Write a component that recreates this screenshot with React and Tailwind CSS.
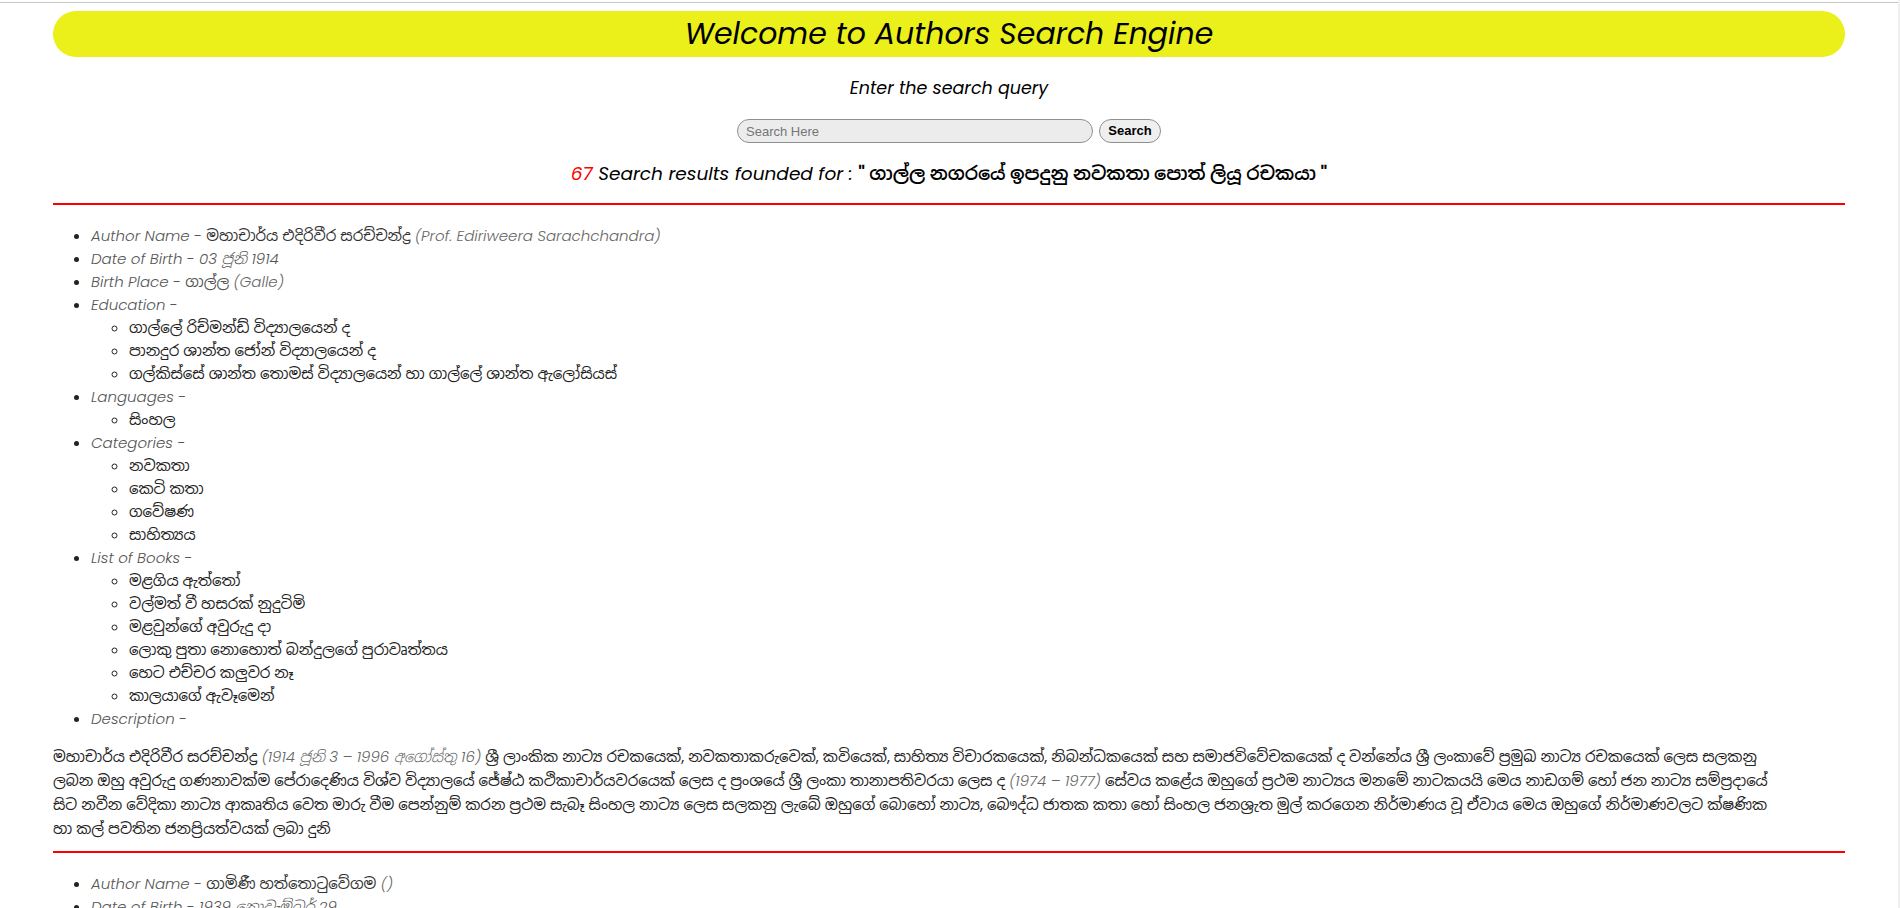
export default function App() {
  const Label = ({ children }) => (
    <span className="italic font-light text-[#555555]">{children}</span>
  );
  const Gray = ({ children }) => (
    <span className="italic font-light text-[#666666]">{children}</span>
  );

  const blocks = [
    {
      name: "මහාචාර්ය එදිරිවීර සරච්චන්ද්‍ර",
      en: "(Prof. Ediriweera Sarachchandra)",
      dob: "03 ජූනි 1914",
      place: "ගාල්ල",
      placeEn: "(Galle)",
      education: [
        "ගාල්ලේ රිච්මන්ඩ් විද්‍යාලයෙන් ද",
        "පානදුර ශාන්ත ජෝන් විද්‍යාලයෙන් ද",
        "ගල්කිස්සේ ශාන්ත තොමස් විද්‍යාලයෙන් හා ගාල්ලේ ශාන්ත ඇලෝසියස්",
      ],
      languages: ["සිංහල"],
      categories: ["නවකතා", "කෙටි කතා", "ගවේෂණ", "සාහිත්‍යය"],
      books: [
        "මළගිය ඇත්තෝ",
        "වල්මත් වී හසරක් නුදුටිමි",
        "මළවුන්ගේ අවුරුදු දා",
        "ලොකු පුතා නොහොත් බන්දුලගේ පුරාවෘත්තය",
        "හෙට එච්චර කලුවර නෑ",
        "කාලයාගේ ඇවෑමෙන්",
      ],
    },
    {
      name: "ගාමිණී හත්තොටුවේගම",
      en: "()",
      dob: "1939 නොවැම්බර් 29",
      place: "කොළඹ",
      placeEn: "(Colombo)",
      education: ["ආනන්ද විද්‍යාලය"],
      languages: ["සිංහල"],
      categories: ["නවකතා", "කෙටි කතා"],
      books: ["ගිරිකූටය", "මිනිසා සහ මිනිසා"],
    },
  ];

  const Sub = ({ items }) => (
    <ul className="list-[circle] pl-[38px]">
      {items.map((t, i) => (
        <li key={i} className="text-[#222222]">{t}</li>
      ))}
    </ul>
  );

  const Block = ({ b, first }) => (
    <div>
      <ul className="list-disc pl-[38px] mt-[19px] mb-[15px] text-[15px] leading-[23px] text-[#222222]">
        <li>
          <Label>Author Name - </Label>
          <span className="text-[#333333]">{b.name} </span>
          <Gray>{b.en}</Gray>
        </li>
        <li>
          <Label>Date of Birth - {b.dob}</Label>
        </li>
        <li>
          <Label>Birth Place - </Label>
          <span className="text-[#555555]">{b.place} </span>
          <Gray>{b.placeEn}</Gray>
        </li>
        <li>
          <Label>Education - </Label>
          <Sub items={b.education} />
        </li>
        <li>
          <Label>Languages - </Label>
          <Sub items={b.languages} />
        </li>
        <li>
          <Label>Categories - </Label>
          <Sub items={b.categories} />
        </li>
        <li>
          <Label>List of Books - </Label>
          <Sub items={b.books} />
        </li>
        <li>
          <Label>Description - </Label>
        </li>
      </ul>
      {first && (
        <p className="text-[15px] leading-[24px] text-[#222222]">
          මහාචාර්ය එදිරිවීර සරච්චන්ද්‍ර <Gray>(1914 ජූනි 3 – 1996 අගෝස්තු 16)</Gray> ශ්‍රී ලාංකික නාට්‍ය රචකයෙක්, නවකතාකරුවෙක්, කවියෙක්, සාහිත්‍ය විචාරකයෙක්, නිබන්ධකයෙක් සහ සමාජවිවේචකයෙක් ද වන්නේය ශ්‍රී ලංකාවේ ප්‍රමුඛ නාට්‍ය රචකයෙක් ලෙස සලකනු
          <br />
          ලබන ඔහු අවුරුදු ගණනාවක්ම පේරාදෙණිය විශ්ව විද්‍යාලයේ ජේෂ්ඨ කථිකාචාර්යවරයෙක් ලෙස ද ප්‍රංශයේ ශ්‍රී ලංකා තානාපතිවරයා ලෙස ද <Gray>(1974 – 1977)</Gray> සේවය කළේය ඔහුගේ ප්‍රථම නාට්‍යය මනමේ නාටකයයි මෙය නාඩගම් හෝ ජන නාට්‍ය සම්ප්‍රදායේ
          <br />
          සිට නවීන වේදිකා නාට්‍ය ආකෘතිය වෙත මාරු වීම පෙන්නුම් කරන ප්‍රථම සැබෑ සිංහල නාට්‍ය ලෙස සලකනු ලැබේ ඔහුගේ බොහෝ නාට්‍ය, බෞද්ධ ජාතක කතා හෝ සිංහල ජනශ්‍රැත මුල් කරගෙන නිර්මාණය වූ ඒවාය මෙය ඔහුගේ නිර්මාණවලට ක්ෂණික
          <br />
          හා කල් පවතින ජනප්‍රියත්වයක් ලබා දුනි
        </p>
      )}
      <div className="h-[2px] bg-[#ff0000] mt-[10px]" />
    </div>
  );

  return (
    <div className="flex min-h-screen bg-white font-['Poppins','Inter','Noto_Sans_Sinhala','Noto_Sans',sans-serif]">
      <div className="flex-1 mt-[2px] border-t border-[#c8c8c8]">
        <div className="mx-[53px] pt-[8px]">
          <div className="h-[46px] rounded-full bg-[#ebf01a] flex items-center justify-center">
            <h1 className="text-[30px] italic font-normal text-black leading-none">
              Welcome to Authors Search Engine
            </h1>
          </div>
          <p className="mt-[19px] text-center text-[17.5px] leading-[24px] italic text-black">
            Enter the search query
          </p>
          <div className="mt-[19px] flex justify-center gap-[6px]">
            <input
              type="text"
              placeholder="Search Here"
              className="w-[356px] h-[24px] rounded-full border border-[#8f8f8f] bg-[#ececec] px-[8px] text-[13px] font-['Liberation_Sans',Arial,sans-serif] text-black placeholder:text-[#757575] outline-none"
            />
            <button className="w-[62px] h-[24px] rounded-full border border-[#8f8f8f] bg-[#efefef] text-[13px] font-bold font-['Liberation_Sans',Arial,sans-serif] text-black">
              Search
            </button>
          </div>
          <p className="mt-[19px] text-center text-[18.5px] leading-[24px] italic text-black">
            <span className="text-[#ff0000]">67</span> Search results founded for :{" "}
            <span className="not-italic font-semibold">" ගාල්ල නගරයේ ඉපදුනු නවකතා පොත් ලියූ රචකයා "</span>
          </p>
          <div className="h-[2px] bg-[#ff0000] mt-[17px]" />
          {blocks.map((b, i) => (
            <Block key={i} b={b} first={i === 0} />
          ))}
        </div>
      </div>
      <div className="w-[2px] bg-[#f0f0f0]" />
    </div>
  );
}
